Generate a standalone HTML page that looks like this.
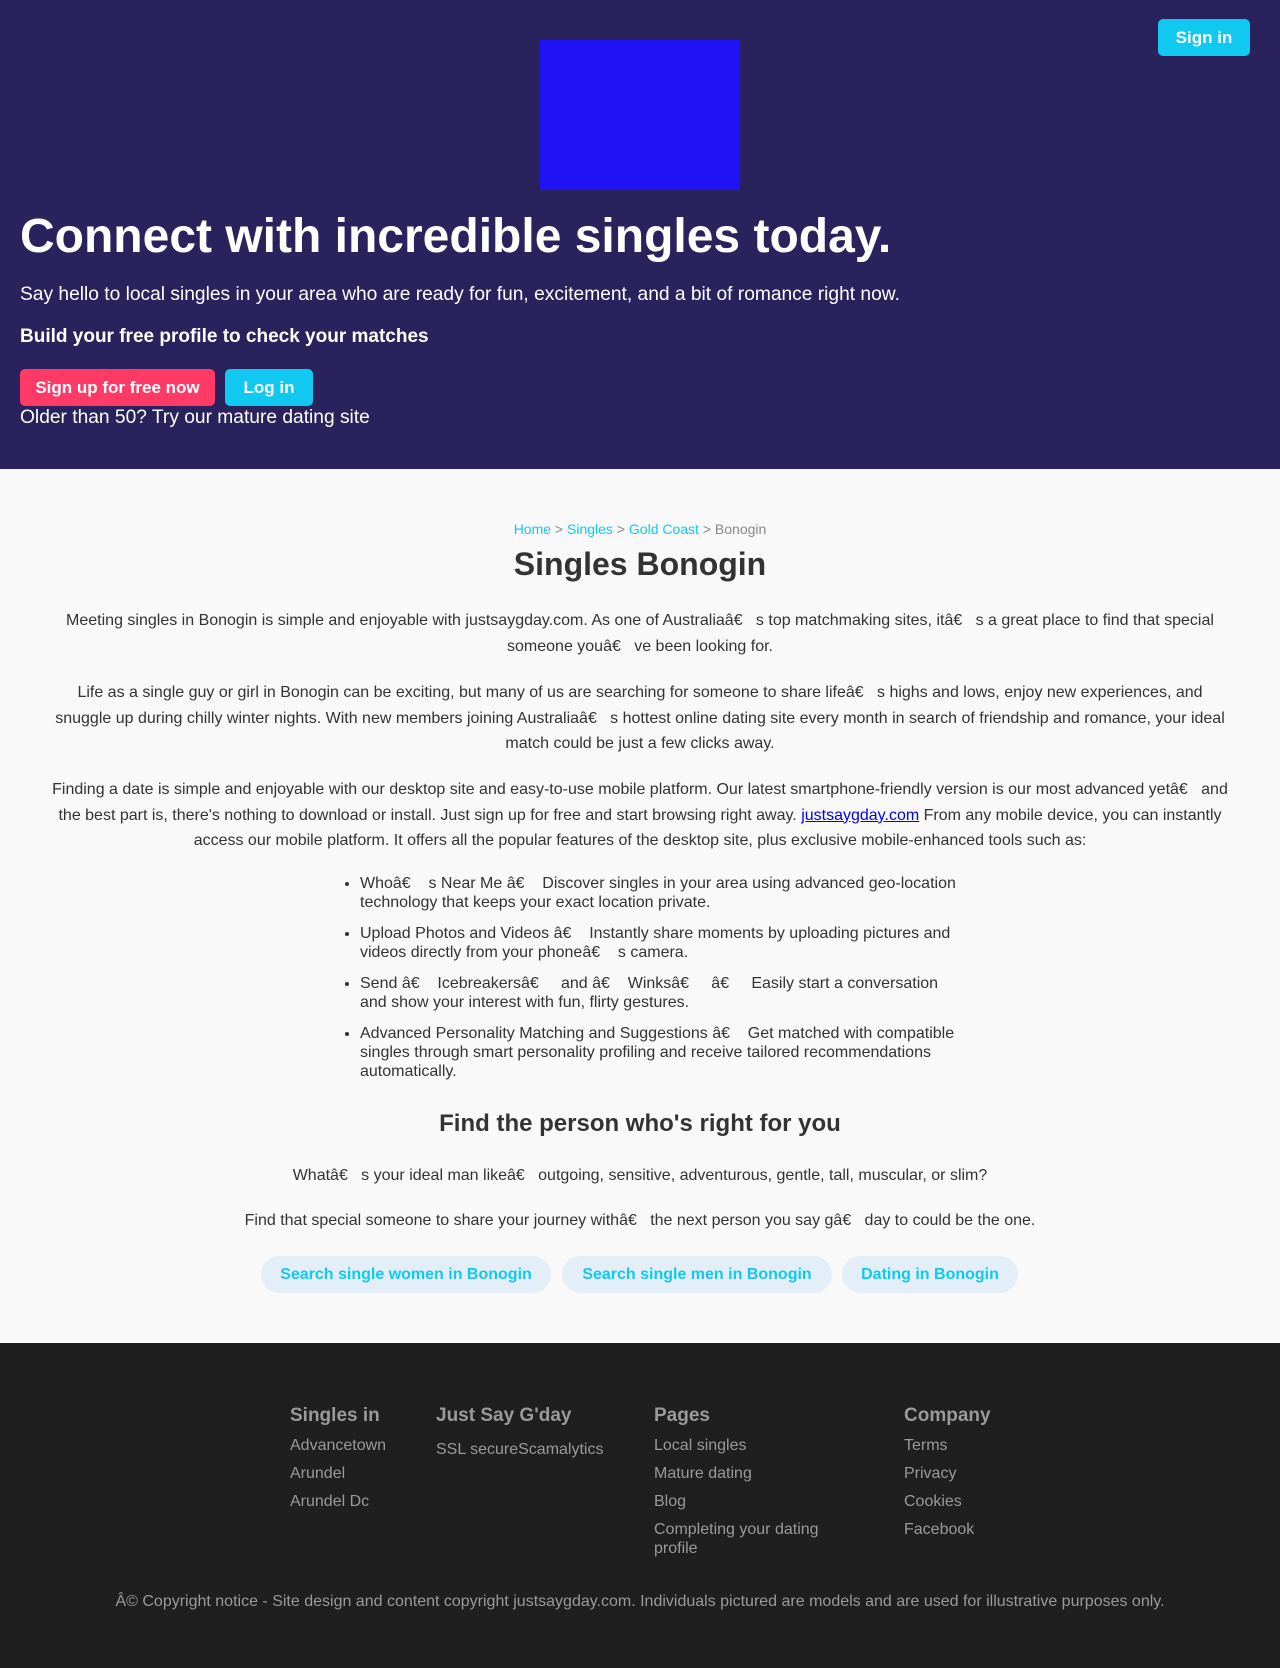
<!DOCTYPE html>
<html><head><meta charset="utf-8"><style>
*{box-sizing:border-box;margin:0;padding:0}
body{width:1280px;height:1668px;font-family:"Liberation Sans",Arial,sans-serif;background:#f9f9f9;color:#333}
.hero{position:relative;height:469px;background:#2a225c;color:#fff}
.signin{position:absolute;left:1158px;top:19px;width:92px;height:37px;background:#11c9f0;border-radius:5px;font-weight:bold;font-size:17px;line-height:37px;text-align:center;color:#fff}
.logo{position:absolute;left:540px;top:40px;width:200px;height:150px;background:#1f12f5}
.h1{position:absolute;left:20px;top:207px;font-size:48px;font-weight:bold;line-height:60px;white-space:nowrap}
.sub{position:absolute;left:20px;top:284px;font-size:19.2px}
.build{position:absolute;left:20px;top:326px;font-size:19px;font-weight:bold}
.btn{position:absolute;top:369px;height:37px;border-radius:5px;font-weight:bold;font-size:17px;line-height:37px;text-align:center;color:#fff}
.older{position:absolute;left:20px;top:407px;font-size:19.2px}
.c{position:absolute;left:48px;width:1184px;text-align:center;font-size:16px;line-height:25.5px}
a{color:#11c9f0;text-decoration:none}
ul{position:absolute;left:320px;top:874px;width:640px;padding-left:40px;font-size:16px;line-height:19px;color:#333}
li{margin-bottom:12px}
.pill{position:absolute;top:1256px;height:37px;border-radius:19px;background:#e4eef8;color:#11c9f0;font-weight:bold;font-size:16px;line-height:37px;text-align:center}
.foot{position:absolute;top:1343px;left:0;width:1280px;height:325px;background:#1f1f1f;color:#9a9a9a}
.col{position:absolute;top:59px;font-size:16px;line-height:28px}
.col b{display:block;font-size:19px;margin-bottom:2px}
</style></head><body>
<div class="hero">
<div class="signin">Sign in</div>
<div class="logo"></div>
<div class="h1">Connect with incredible singles today.</div>
<div class="sub">Say hello to local singles in your area who are ready for fun, excitement, and a bit of romance right now.</div>
<div class="build">Build your free profile to check your matches</div>
<div class="btn" style="left:20px;width:195px;background:#ff3a66">Sign up for free now</div>
<div class="btn" style="left:225px;width:88px;background:#11c9f0">Log in</div>
<div class="older">Older than 50? Try our mature dating site</div>
</div>
<div class="c" style="top:517px;font-size:14px;color:#888"><a>Home</a> &gt; <a>Singles</a> &gt; <a>Gold Coast</a> &gt; Bonogin</div>
<div class="c" style="top:544px;font-size:32px;font-weight:bold;line-height:40px">Singles Bonogin</div>
<div class="c" style="top:608px">Meeting singles in Bonogin is simple and enjoyable with justsaygday.com. As one of Australiaâ€&nbsp;&nbsp;&nbsp;s top matchmaking sites, itâ€&nbsp;&nbsp;&nbsp;s a great place to find that special someone youâ€&nbsp;&nbsp;&nbsp;ve been looking for.</div>
<div class="c" style="top:680px">Life as a single guy or girl in Bonogin can be exciting, but many of us are searching for someone to share lifeâ€&nbsp;&nbsp;&nbsp;s highs and lows, enjoy new experiences, and snuggle up during chilly winter nights. With new members joining Australiaâ€&nbsp;&nbsp;&nbsp;s hottest online dating site every month in search of friendship and romance, your ideal match could be just a few clicks away.</div>
<div class="c" style="top:777px">Finding a date is simple and enjoyable with our desktop site and easy-to-use mobile platform. Our latest smartphone-friendly version is our most advanced yetâ€&nbsp;&nbsp;&nbsp;and the best part is, there's nothing to download or install. Just sign up for free and start browsing right away. <span style="color:#00e;text-decoration:underline">justsaygday.com</span> From any mobile device, you can instantly access our mobile platform. It offers all the popular features of the desktop site, plus exclusive mobile-enhanced tools such as:</div>
<ul>
<li>Whoâ€&nbsp;&nbsp;&nbsp;&nbsp;s Near Me â€&nbsp;&nbsp;&nbsp;&nbsp;Discover singles in your area using advanced geo-location technology that keeps your exact location private.</li>
<li>Upload Photos and Videos â€&nbsp;&nbsp;&nbsp;&nbsp;Instantly share moments by uploading pictures and videos directly from your phoneâ€&nbsp;&nbsp;&nbsp;&nbsp;s camera.</li>
<li>Send â€&nbsp;&nbsp;&nbsp;&nbsp;Icebreakersâ€&nbsp;&nbsp;&nbsp;&nbsp;&nbsp;and â€&nbsp;&nbsp;&nbsp;&nbsp;Winksâ€&nbsp;&nbsp;&nbsp;&nbsp;&nbsp;â€&nbsp;&nbsp;&nbsp;&nbsp;&nbsp;Easily start a conversation and show your interest with fun, flirty gestures.</li>
<li>Advanced Personality Matching and Suggestions â€&nbsp;&nbsp;&nbsp;&nbsp;Get matched with compatible singles through smart personality profiling and receive tailored recommendations automatically.</li>
</ul>
<div class="c" style="top:1109px;font-size:24px;font-weight:bold;line-height:30px">Find the person who's right for you</div>
<div class="c" style="top:1163px">Whatâ€&nbsp;&nbsp;&nbsp;s your ideal man likeâ€&nbsp;&nbsp;&nbsp;outgoing, sensitive, adventurous, gentle, tall, muscular, or slim?</div>
<div class="c" style="top:1208px">Find that special someone to share your journey withâ€&nbsp;&nbsp;&nbsp;the next person you say gâ€&nbsp;&nbsp;&nbsp;day to could be the one.</div>
<div class="pill" style="left:261px;width:290px">Search single women in Bonogin</div>
<div class="pill" style="left:562px;width:270px">Search single men in Bonogin</div>
<div class="pill" style="left:842px;width:176px">Dating in Bonogin</div>
<div class="foot">
<div class="col" style="left:290px"><b>Singles in</b>Advancetown<br>Arundel<br>Arundel Dc</div>
<div class="col" style="left:436px"><b>Just Say G'day</b><div style="margin-top:6px">SSL secureScamalytics</div></div>
<div class="col" style="left:654px;width:190px"><b>Pages</b>Local singles<br>Mature dating<br>Blog<br><div style="line-height:19px;margin-top:4px">Completing your dating profile</div></div>
<div class="col" style="left:904px"><b>Company</b>Terms<br>Privacy<br>Cookies<br>Facebook</div>
<div style="position:absolute;top:250px;width:1280px;text-align:center;font-size:16px">Â© Copyright notice - Site design and content copyright justsaygday.com. Individuals pictured are models and are used for illustrative purposes only.</div>
</div>
</body></html>
